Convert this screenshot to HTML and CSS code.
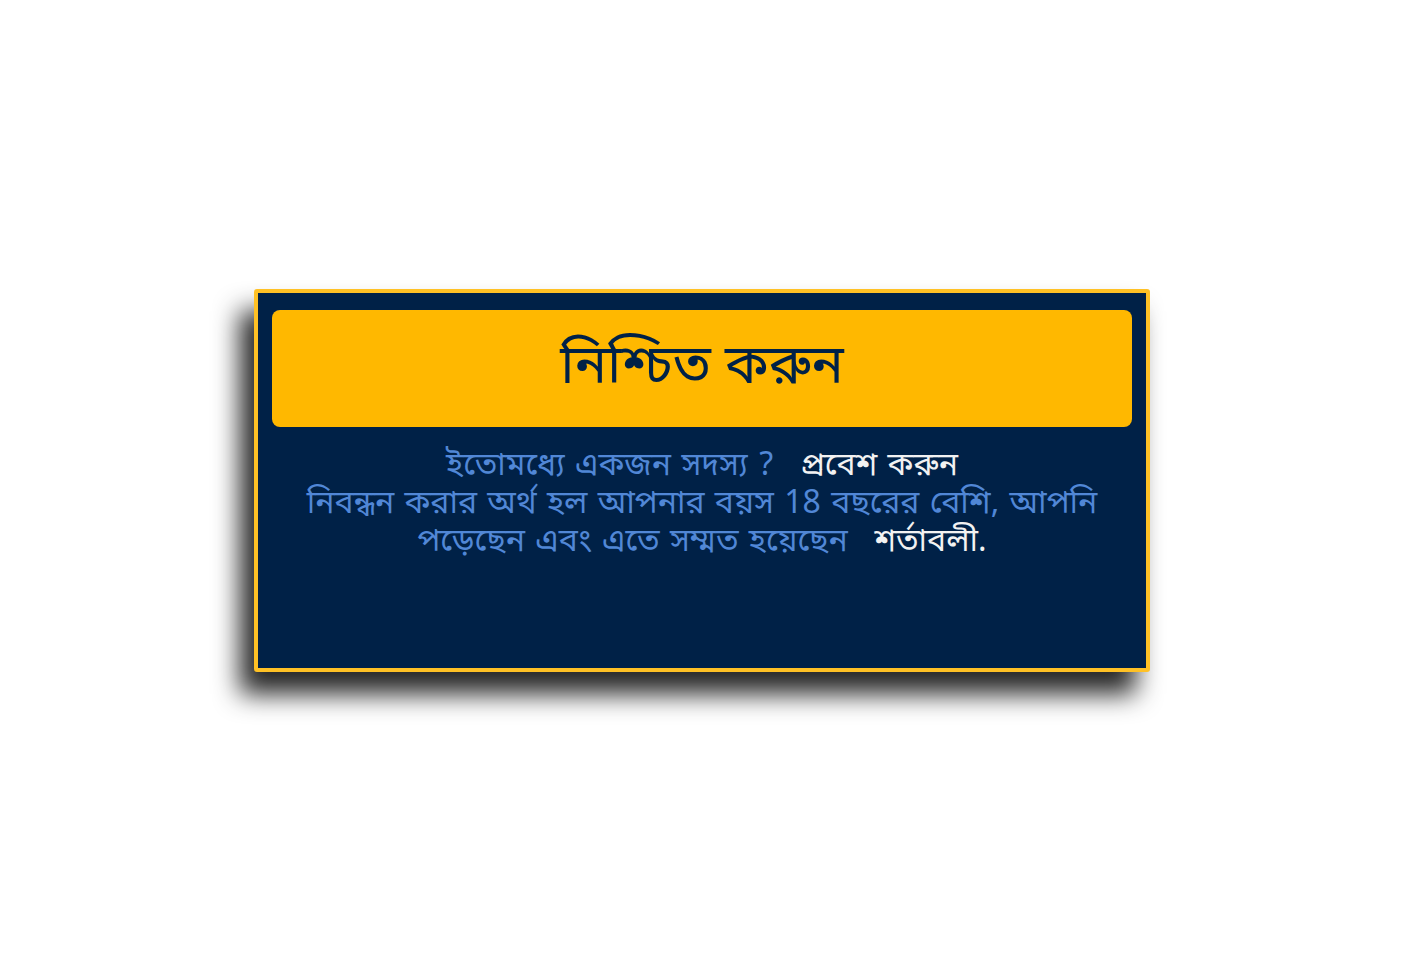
FILE: index.html
```html
<!DOCTYPE html>
<html lang="bn">

<head>
    <meta charset="UTF-8">
    <meta name="viewport" content="width=device-width, initial-scale=1.0">
    <title>নিশ্চিত করুন</title>
    <link rel="stylesheet" href="styles.css">
</head>

<body>

    <div class="confirm-box">
        <div class="confirm-header">
            <h1>নিশ্চিত করুন</h1>
        </div>
        <div class="confirm-body">
            <p>ইতোমধ্যে একজন সদস্য ? <a href="#" class="link">প্রবেশ করুন</a></p>
            <p>নিবন্ধন করার অর্থ হল আপনার বয়স 18 বছরের বেশি, আপনি পড়েছেন এবং এতে সম্মত হয়েছেন <a href="#" class="link">শর্তাবলী.</a></p>
        </div>
    </div>

</body>

</html>
```

FILE: styles.css
```css
body {
    margin: 0;
    height: 100vh;
    background-color: #fff;
    display: flex;
    justify-content: center;
    align-items: center;
    font-family: "Noto Sans Bengali", "Lohit Bengali", "Noto Serif Bengali", "Noto Sans", sans-serif;
}

.confirm-box {
    box-sizing: border-box;
    width: 896px;
    height: 383px;
    padding: 17px 14px;
    background-color: #002147;
    border: 4px solid #ffc125;
    border-radius: 3px;
    box-shadow: -14px 22px 26px rgba(0, 0, 0, 0.85);
}

.confirm-header {
    background-color: #ffb800;
    border-radius: 8px;
    height: 117px;
    display: flex;
    justify-content: center;
    align-items: center;
}

.confirm-header h1 {
    margin: 0;
    font-size: 54px;
    font-weight: normal;
    color: #002147;
}

.confirm-body {
    padding: 0 26px;
    margin-top: 21px;
    text-align: center;
    color: #5187d6;
    font-size: 32px;
    line-height: 38px;
    word-spacing: 2px;
}

.confirm-body p {
    margin: 0;
}

.link {
    color: #f2f2f2;
    text-decoration: none;
    margin-left: 16px;
}
```
